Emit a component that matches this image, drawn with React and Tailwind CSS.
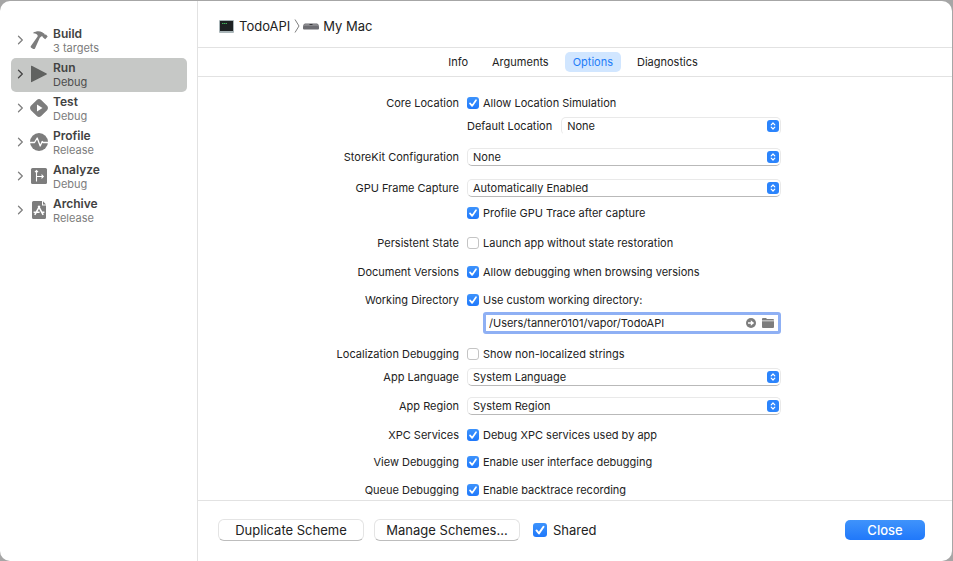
import { useState } from "react";

const schemes = [
  { name: "Build", detail: "3 targets", icon: "hammer" },
  { name: "Run", detail: "Debug", icon: "play", selected: true },
  { name: "Test", detail: "Debug", icon: "test" },
  { name: "Profile", detail: "Release", icon: "profile" },
  { name: "Analyze", detail: "Debug", icon: "analyze" },
  { name: "Archive", detail: "Release", icon: "archive" },
];

function SchemeIcon({ kind }) {
  const box = { viewBox: "0 0 18 18", "aria-hidden": true };
  if (kind === "hammer")
    return (
      <svg {...box} className="size-[18px] text-[#7d7d7d]" fill="currentColor">
        <path d="M3.200 1.800C5.800.1 9.600-.2 12.200 1.200l2.200 1.500.4 1.100 1.200-.3 1.700 1.900-2.500 2.900-2.400-2-.1-.9-1.200-.2-1.700 1.500L5 17.600c-.4.600-1.200.7-1.800.3L1.200 16.700c-.6-.5-.7-1-.3-1.600L7.600 5.500c.2-1.100 0-1.800-.9-2.300-1-.6-2.100-.8-3.500-.9z" />
      </svg>
    );
  if (kind === "play")
    return (
      <svg {...box} className="size-[18px] text-[#606260]" fill="currentColor">
        <path d="M1 1.200Q1 .4 1.800.8L16.600 8.400q.8.500 0 1L1.800 17q-.8.400-.8-.4z" />
      </svg>
    );
  if (kind === "test")
    return (
      <svg {...box} className="size-[18px] text-[#7d7d7d]" fill="currentColor">
        <path fillRule="evenodd" d="M6.800.9q2.200-1.700 4.400 0l5.900 5.900q1.700 2.200 0 4.400l-5.900 5.900q-2.200 1.700-4.400 0L.9 11.200q-1.700-2.200 0-4.400zM7 5.500v7L12.500 9z" />
      </svg>
    );
  if (kind === "profile")
    return (
      <svg {...box} className="size-[18px]">
        <circle cx="9" cy="9" r="9" fill="#7d7d7d" />
        <path d="M0 9.500h4.500L7.200 5l3 8 2-4.500.8 1h5" fill="none" stroke="#fff" strokeWidth="1.300" strokeLinejoin="round" />
      </svg>
    );
  if (kind === "analyze")
    return (
      <svg {...box} className="size-[18px]">
        <rect x="1" y="1" width="16" height="16" rx="1.500" fill="#7d7d7d" />
        <path d="M6.500 14.500V4M5 5.200l1.500-1.700L8 5.200M6.500 9.500h6.500M11.500 7.700l1.800 1.800-1.800 1.800" fill="none" stroke="#fff" strokeWidth="1.100" />
      </svg>
    );
  return (
    <svg {...box} className="size-[18px]">
      <path d="M3.500 0H12v4.500h4v12q0 1.500-1.500 1.500h-11Q2 18 2 16.500v-15Q2 0 3.500 0z" fill="#7d7d7d" />
      <path d="M13 .3 16 3.500h-3z" fill="#7d7d7d" />
      <path d="M8.300 4.800l4.900 9M9.700 4.800l-4.900 9M3.600 11.300h6M11.800 11.300h2.600" fill="none" stroke="#fff" strokeWidth="1.600" />
    </svg>
  );
}

function Check({ id, defaultChecked, large }) {
  return (
    <span className="grid shrink-0 place-items-center">
      <input
        id={id}
        type="checkbox"
        defaultChecked={defaultChecked}
        className={
          "peer [grid-area:1/1] appearance-none border border-[#c4c4c4] bg-white checked:border-0 checked:bg-linear-to-b checked:from-[#3d93fc] checked:to-[#1f78fb] " +
          (large ? "size-[14px] rounded-[3px]" : "size-3 rounded-[3px]")
        }
      />
      <svg
        viewBox="0 0 12 12"
        aria-hidden="true"
        className={"pointer-events-none invisible [grid-area:1/1] peer-checked:visible " + (large ? "size-[14px]" : "size-3")}
      >
        <path d="M3 6.400 5.100 8.900 9 3.200" fill="none" stroke="#fff" strokeWidth="1.700" strokeLinecap="round" strokeLinejoin="round" />
      </svg>
    </span>
  );
}

function CheckRow({ id, label, text, checked, space }) {
  return (
    <Row space={space} label={label}>
      <Check id={id} defaultChecked={checked} />
      <label htmlFor={id} className="ml-1 whitespace-nowrap">{text}</label>
    </Row>
  );
}

function Row({ label, htmlFor, space, children }) {
  return (
    <div className={"grid h-5 grid-cols-[261fr_314fr_163fr] items-center gap-x-2 " + space}>
      {htmlFor ? (
        <label htmlFor={htmlFor} className="text-right whitespace-nowrap">{label}</label>
      ) : (
        <span className="text-right whitespace-nowrap">{label}</span>
      )}
      <div className="flex min-w-0 items-center">{children}</div>
    </div>
  );
}

function Popup({ id, value, open }) {
  return (
    <span className="grid min-w-0 flex-1 items-center">
      <select
        id={id}
        className={
          "h-[18px] w-full appearance-none rounded-[5px] border border-[#e9e9e9] bg-white pr-6 pl-[5px] text-[11px] leading-4 text-[#222] outline-none [grid-area:1/1] " +
          (open ? "border-b-transparent" : "border-b-[#b9b9b9]")
        }
      >
        <option>{value}</option>
      </select>
      <svg viewBox="0 0 12 12" aria-hidden="true" className="pointer-events-none mr-[2px] size-3 justify-self-end [grid-area:1/1]">
        <rect width="12" height="12" rx="3" fill="#2b84fc" />
        <path d="M4.200 4.800 6 3l1.800 1.800M4.200 7.200 6 9l1.800-1.800" fill="none" stroke="#fff" strokeWidth="1.200" strokeLinecap="round" strokeLinejoin="round" />
      </svg>
    </span>
  );
}

function PushButton({ children }) {
  return (
    <button type="button" className="h-[22px] w-[146px] rounded-[6px] border border-[#e4e4e4] border-b-[#bdbdbd] bg-white text-[13px] leading-5 whitespace-nowrap">
      {children}
    </button>
  );
}

export default function App() {
  const [tab, setTab] = useState("Options");
  const [path, setPath] = useState("/Users/tanner0101/vapor/TodoAPI");
  return (
    <div className="flex min-h-screen bg-[#a6a6a6] pt-px pr-px font-['Inter','Liberation_Sans',sans-serif] text-[11px] leading-4 text-[#222]">
      <div className="flex min-w-0 flex-1 overflow-hidden rounded-[10px] bg-white">
        <nav className="w-[198px] shrink-0 border-r border-[#e2e2e2] pt-[23px] pr-[10px] pl-[11px]">
          {schemes.map((s) => (
            <button
              key={s.name}
              type="button"
              className={"flex h-[34px] w-full items-center rounded-[5px] pl-[6px] text-left " + (s.selected ? "bg-[#c6c8c6]" : "")}
            >
              <span className="flex items-center pb-[2px]">
                <svg viewBox="0 0 6 10" aria-hidden="true" className={"mr-[6px] h-[10px] w-[7px] " + (s.selected ? "text-[#444]" : "text-[#808080]")}>
                  <path d="M1 1.200 4.800 5 1 8.800" fill="none" stroke="currentColor" strokeWidth="1.300" strokeLinecap="round" strokeLinejoin="round" />
                </svg>
                <SchemeIcon kind={s.icon} />
              </span>
              <span className="ml-[5px] flex flex-col">
                <span className="text-[12px] leading-[14px] font-semibold text-[#424242]">{s.name}</span>
                <span className={"text-[11px] leading-[14px] " + (s.selected ? "text-[#4c4c4c]" : "text-[#7c7c7c]")}>{s.detail}</span>
              </span>
            </button>
          ))}
        </nav>

        <main className="flex min-w-0 flex-1 flex-col">
          <header className="flex h-[47px] items-center border-b border-[#e2e2e2] pt-[4px] pl-[21px] text-[13px]">
            <svg viewBox="0 0 15 13" aria-hidden="true" className="h-[13px] w-[15px]">
              <rect width="15" height="13" rx="1" fill="#a9b5b8" />
              <rect x="1" y="1" width="13" height="10" fill="#1d2123" />
              <path d="M3 3.500h5" stroke="#3fae5a" strokeDasharray="1.500 .5" />
            </svg>
            <span className="ml-[5px]">TodoAPI</span>
            <svg viewBox="0 0 6 14" aria-hidden="true" className="ml-1 h-[14px] w-[6px]">
              <path d="M1 .5 5 7 1 13.500" fill="none" stroke="#808080" />
            </svg>
            <svg viewBox="0 0 16 7" aria-hidden="true" className="mr-1 ml-[3px] h-[7px] w-4">
              <path d="M2 .5h12q1.500 0 2 3v2q0 1-1 1H1q-1 0-1-1v-2q.5-3 2-3z" fill="#6d6d72" />
              <path d="M2 1h12q1 0 1.500 2H.5Q1 1 2 1z" fill="#88888c" />
              <path d="M6.500 1.500h3" stroke="#39393c" />
            </svg>
            <span>My Mac</span>
          </header>

          <div role="tablist" className="flex h-[29px] items-center justify-center border-b border-[#e2e2e2] pr-1">
            {["Info", "Arguments", "Options", "Diagnostics"].map((t) => (
              <button
                key={t}
                type="button"
                role="tab"
                aria-selected={t === tab}
                onClick={() => setTab(t)}
                className={"mx-1 h-5 rounded-[5px] px-2 " + (t === tab ? "bg-[#d1e6ff] text-[#1f7cf8]" : "")}
              >
                {t}
              </button>
            ))}
          </div>

          <form className="flex-1 pt-4">
            <CheckRow id="location" label="Core Location" text="Allow Location Simulation" checked space="" />
            <Row space="mt-[3px]" label="">
              <label htmlFor="default-location" className="mr-[9px] whitespace-nowrap">Default Location</label>
              <Popup id="default-location" value="None" open />
            </Row>
            <Row space="mt-[11px]" label="StoreKit Configuration" htmlFor="storekit">
              <Popup id="storekit" value="None" />
            </Row>
            <Row space="mt-[11px]" label="GPU Frame Capture" htmlFor="gpu">
              <Popup id="gpu" value="Automatically Enabled" />
            </Row>
            <CheckRow id="trace" label="" text="Profile GPU Trace after capture" checked space="mt-[5px]" />
            <CheckRow id="state" label="Persistent State" text="Launch app without state restoration" space="mt-[10px]" />
            <CheckRow id="versions" label="Document Versions" text="Allow debugging when browsing versions" checked space="mt-[9px]" />
            <CheckRow id="directory" label="Working Directory" text="Use custom working directory:" checked space="mt-2" />
            <Row space="mt-[2px]" label="">
              <div className="ml-4 flex h-[22px] min-w-0 flex-1 items-center rounded-[3px] border-3 border-[#8fb0f4] bg-white pr-1 pl-[3px]">
                <input
                  type="text"
                  aria-label="Custom working directory"
                  value={path}
                  onChange={(e) => setPath(e.target.value)}
                  className="h-4 min-w-0 flex-1 bg-transparent outline-none"
                />
                <button type="button" aria-label="Reveal directory">
                  <svg viewBox="0 0 10 10" className="size-[10px]">
                    <circle cx="5" cy="5" r="5" fill="#7d7d7d" />
                    <path d="M2 4.200h2.800V2.200L8.200 5 4.800 7.800v-2H2z" fill="#fff" />
                  </svg>
                </button>
                <button type="button" aria-label="Choose directory" className="ml-[6px]">
                  <svg viewBox="0 0 12 10" className="h-[10px] w-3" fill="#7d7d7d">
                    <path d="M0 2.500V1q0-1 1-1h3l1 1h6q1 0 1 1v.5zM0 3.300h12V9q0 1-1 1H1q-1 0-1-1z" />
                  </svg>
                </button>
              </div>
            </Row>
            <CheckRow id="strings" label="Localization Debugging" text="Show non-localized strings" space="mt-3" />
            <Row space="mt-[3px]" label="App Language" htmlFor="language">
              <Popup id="language" value="System Language" />
            </Row>
            <Row space="mt-[9px]" label="App Region" htmlFor="region">
              <Popup id="region" value="System Region" />
            </Row>
            <CheckRow id="xpc" label="XPC Services" text="Debug XPC services used by app" checked space="mt-[9px]" />
            <CheckRow id="view" label="View Debugging" text="Enable user interface debugging" checked space="mt-[7px]" />
            <CheckRow id="queue" label="Queue Debugging" text="Enable backtrace recording" checked space="mt-2" />
          </form>

          <footer className="flex h-[61px] items-center border-t border-[#e2e2e2] pr-[27px] pb-[3px] pl-5 text-[13px]">
            <PushButton>Duplicate Scheme</PushButton>
            <span className="ml-[10px]">
              <PushButton>Manage Schemes...</PushButton>
            </span>
            <span className="ml-[13px] flex items-center">
              <Check id="shared" defaultChecked large />
              <label htmlFor="shared" className="ml-[6px]">Shared</label>
            </span>
            <button type="button" className="ml-auto h-5 w-20 rounded-[5px] bg-linear-to-b from-[#3f93fb] to-[#2078fa] font-medium text-white">
              Close
            </button>
          </footer>
        </main>
      </div>
    </div>
  );
}
